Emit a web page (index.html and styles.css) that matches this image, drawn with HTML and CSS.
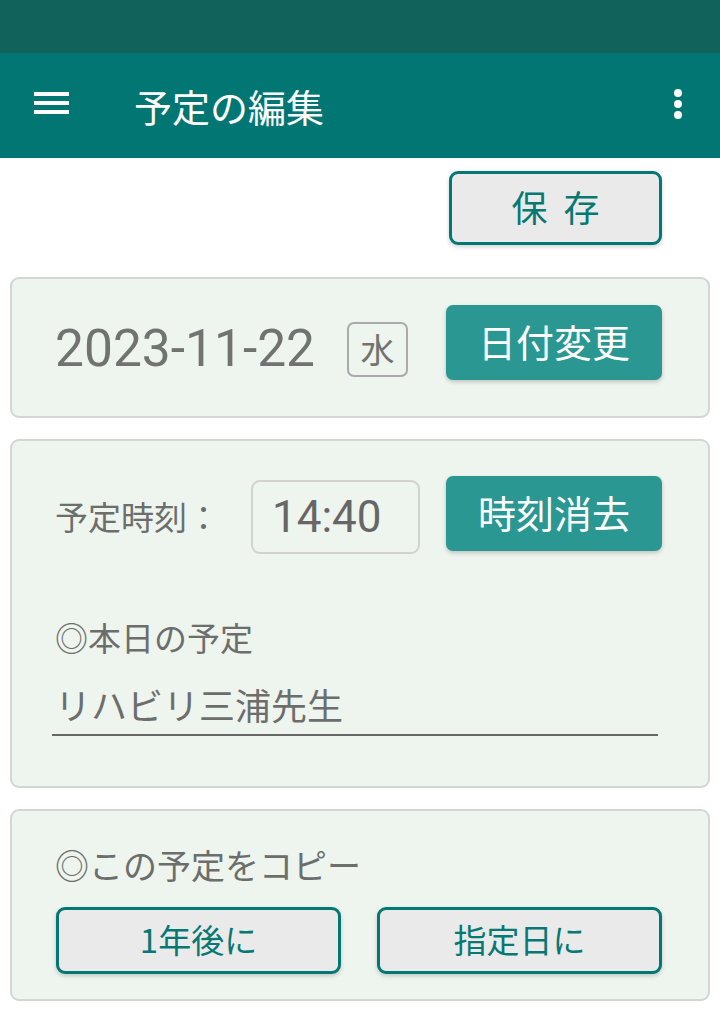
FILE: index.html
```html
<!DOCTYPE html>
<html lang="ja">
<head>
<meta charset="utf-8">
<title>予定の編集</title>
<link rel="stylesheet" href="styles.css">
</head>
<body>
<div class="status-bar"></div>
<header class="app-bar">
  <svg class="menu-icon" width="36" height="24" viewBox="0 0 36 24">
    <rect x="0" y="1" width="35" height="4" fill="#fff"/>
    <rect x="0" y="10" width="35" height="4" fill="#fff"/>
    <rect x="0" y="19" width="35" height="4" fill="#fff"/>
  </svg>
  <h1 class="title">予定の編集</h1>
  <svg class="more-icon" width="10" height="32" viewBox="0 0 10 32">
    <circle cx="5" cy="5" r="4" fill="#fff"/>
    <circle cx="5" cy="16" r="4" fill="#fff"/>
    <circle cx="5" cy="27" r="4" fill="#fff"/>
  </svg>
</header>
<main class="content">
  <div class="save-row">
    <button class="outline-btn save-btn">保 存</button>
  </div>
  <section class="card date-card">
    <span class="date-text">2023-11-22</span>
    <span class="weekday">水</span>
    <button class="fill-btn">日付変更</button>
  </section>
  <section class="card plan-card">
    <div class="time-row">
      <span class="time-label">予定時刻：</span>
      <span class="time-box">14:40</span>
      <button class="fill-btn">時刻消去</button>
    </div>
    <div class="section-label plan-label">◎本日の予定</div>
    <div class="plan-input">リハビリ三浦先生</div>
  </section>
  <section class="card copy-card">
    <div class="section-label">◎この予定をコピー</div>
    <div class="copy-row">
      <button class="outline-btn copy-btn">1年後に</button>
      <button class="outline-btn copy-btn">指定日に</button>
    </div>
  </section>
</main>
</body>
</html>
```
FILE: styles.css
```css
* { box-sizing: border-box; }
html, body {
  margin: 0;
  padding: 0;
  background: #ffffff;
  font-family: "Noto Sans CJK JP", "Noto Sans", sans-serif;
}
.status-bar {
  height: 53px;
  background: #11625b;
}
.app-bar {
  height: 105px;
  background: #027672;
  display: flex;
  align-items: center;
  padding: 0 37px 0 34px;
}
.menu-icon { display: block; margin-top: -6px; }
.title {
  margin: 0 0 0 64px;
  font-size: 38px;
  font-weight: 400;
  color: #ffffff;
  line-height: 1;
}
.more-icon { display: block; margin-left: auto; margin-top: -4px; }

.content {
  padding: 0 10px;
}
.save-row {
  display: flex;
  justify-content: flex-end;
  padding: 13px 48px 0 0;
}
.outline-btn {
  font-family: "Noto Sans CJK JP", sans-serif;
  background: #eaeaea;
  border: 3px solid #037773;
  border-radius: 9px;
  color: #087873;
  box-shadow: 0 2px 4px rgba(0, 0, 0, 0.18);
  padding: 0;
  line-height: 1;
}
.save-btn {
  width: 213px;
  height: 74px;
  font-size: 36px;
  padding: 0 0 4px 4px;
  letter-spacing: 4px;
}
.card {
  background: #eef4ee;
  border: 2px solid #d4d6d4;
  border-radius: 9px;
}
.date-card {
  margin-top: 32px;
  height: 141px;
  display: flex;
  align-items: center;
  padding: 0 46px 0 43px;
}
.date-text {
  font-family: Roboto, "Liberation Sans", sans-serif;
  font-size: 51.5px;
  color: #717370;
  line-height: 1;
  margin-top: 2px;
}
.weekday {
  margin-left: 32px;
  width: 61px;
  height: 55px;
  border: 2px solid #a9aaa9;
  border-radius: 7px;
  display: flex;
  align-items: center;
  justify-content: center;
  font-size: 34px;
  color: #717370;
  line-height: 1;
  margin-top: 3px;
}
.fill-btn {
  margin-left: auto;
  width: 216px;
  height: 75px;
  background: #2a9792;
  border: none;
  border-radius: 7px;
  color: #ffffff;
  font-family: "Noto Sans CJK JP", sans-serif;
  font-size: 38px;
  line-height: 1;
  padding: 0 0 4px;
  box-shadow: 0 2px 4px rgba(0, 0, 0, 0.2);
}
.date-card .fill-btn {
  align-self: flex-start;
  margin-top: 26px;
}
.plan-card {
  margin-top: 21px;
  height: 349px;
  padding: 35px 46px 0 43px;
}
.time-row {
  display: flex;
  align-items: flex-start;
}
.time-label {
  width: 196px;
  font-size: 33px;
  color: #6c6e6b;
  line-height: 1;
  margin-top: 24px;
}
.time-box {
  width: 169px;
  height: 74px;
  border: 2px solid #d2d2d0;
  border-radius: 9px;
  font-family: Roboto, "Liberation Sans", sans-serif;
  font-size: 44px;
  color: #666666;
  line-height: 1;
  padding: 13px 0 0 19px;
  margin-top: 4px;
}
.time-row .fill-btn {
  margin-left: auto;
}
.section-label {
  font-size: 33px;
  color: #6c6e6b;
  line-height: 1;
}
.plan-label {
  margin-top: 67px;
}
.plan-input {
  margin-top: 32px;
  margin-right: 4px;
  margin-left: -3px;
  font-size: 36px;
  color: #6c6e6b;
  line-height: 1;
  padding: 0 0 12px 3px;
  border-bottom: 2px solid #666866;
}
.copy-card {
  margin-top: 21px;
  height: 192px;
  padding: 37px 46px 0 43px;
}
.copy-card .section-label {
  font-size: 34px;
}
.copy-row {
  display: flex;
  justify-content: space-between;
  margin-top: 25px;
  margin-left: 1px;
}
.copy-btn {
  width: 285px;
  height: 67px;
  font-size: 33px;
  padding-bottom: 3px;
}
```
